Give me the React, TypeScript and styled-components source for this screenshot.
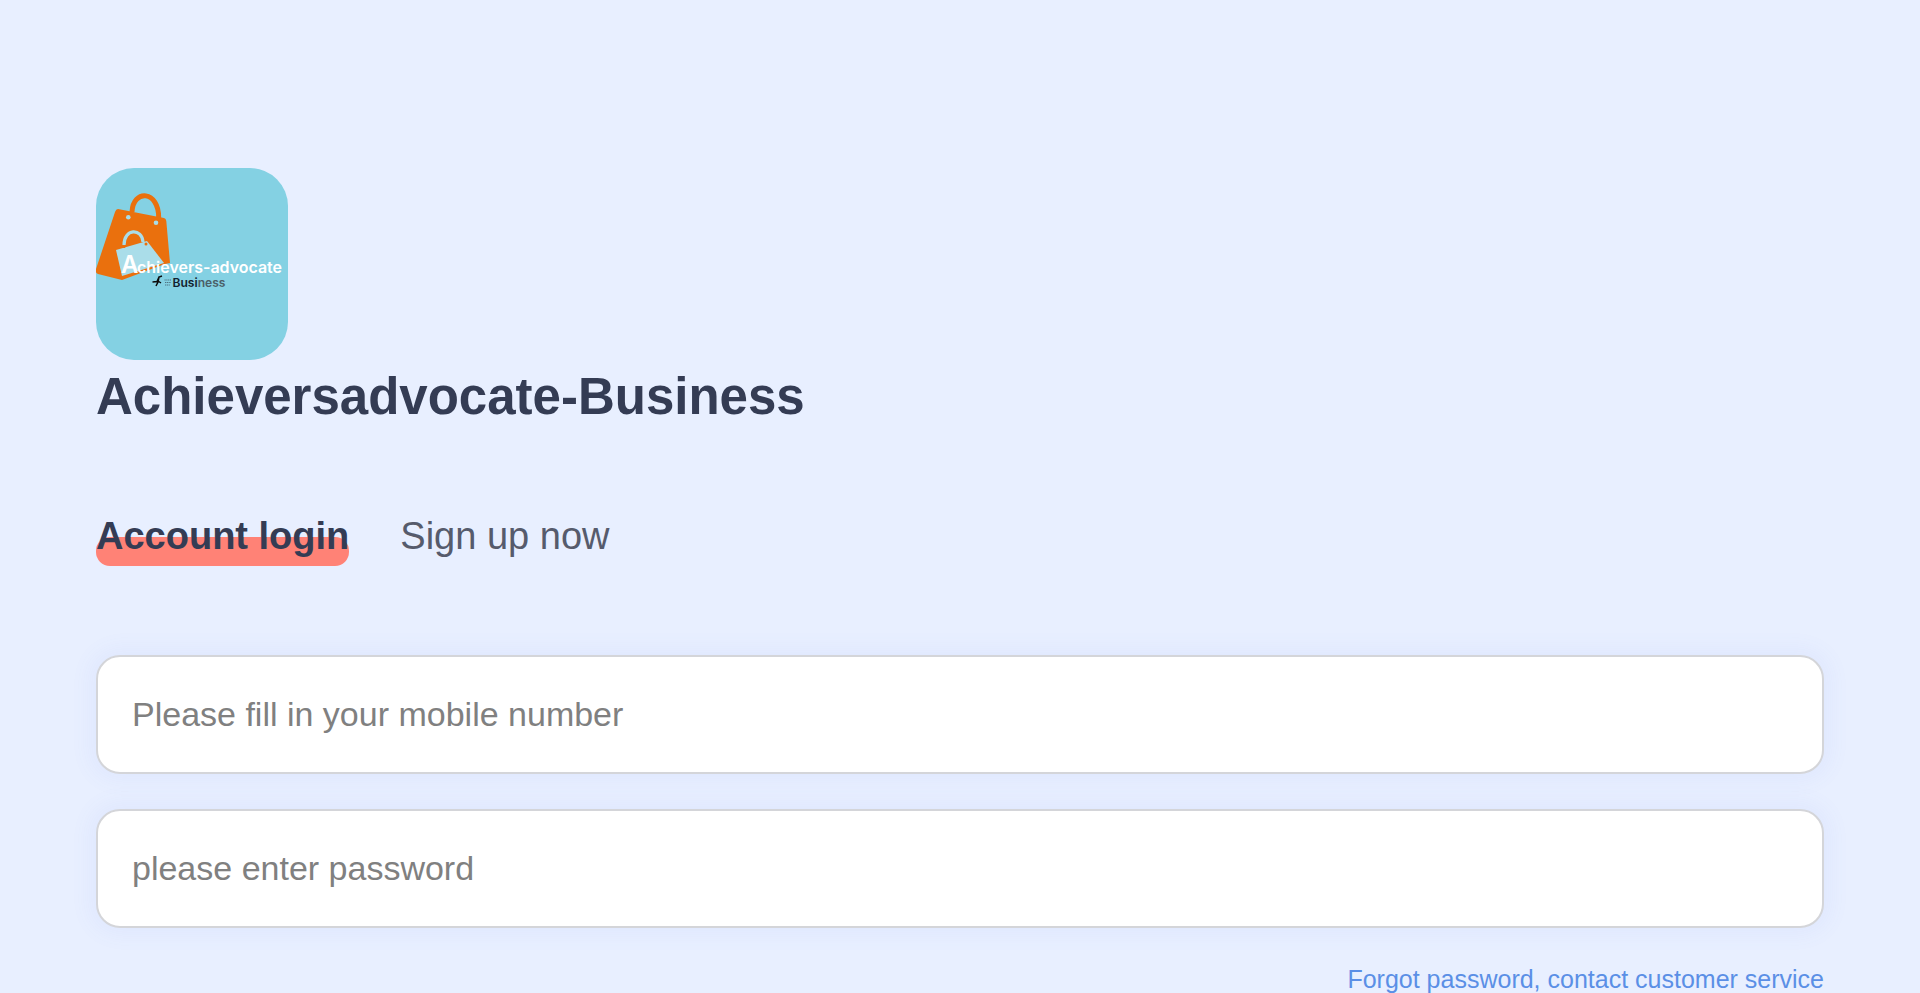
import styled, { createGlobalStyle } from 'styled-components'

const GlobalStyle = createGlobalStyle`
  * {
    box-sizing: border-box;
  }

  html, body {
    margin: 0;
    height: 100%;
    overflow: hidden;
    background: #e8efff;
    font-family: "Liberation Sans", Arial, sans-serif;
  }
`

const Page = styled.div`
  height: 993px;
  padding: 168px 96px 0;
  background: #e8efff;
`

const LogoBox = styled.div`
  width: 192px;
  height: 192px;
  border-radius: 38px;
  background: #84d1e3;
  overflow: hidden;
`

const Title = styled.h1`
  margin: 0;
  height: 72px;
  color: #343c54;
  font-size: 51px;
  font-weight: 700;
  line-height: 74px;
`

const Tabs = styled.div`
  display: flex;
  gap: 51px;
  margin-top: 75px;
`

const Tab = styled.div<{ $active?: boolean }>`
  position: relative;
  height: 58px;
  color: ${(props) => (props.$active ? '#343c54' : '#565b6c')};
  font-size: 38px;
  font-weight: ${(props) => (props.$active ? 700 : 400)};
  line-height: 58px;

  &::before {
    content: '';
    display: ${(props) => (props.$active ? 'block' : 'none')};
    position: absolute;
    left: 0;
    right: 0;
    bottom: -1px;
    height: 29px;
    border-radius: 14px;
    background: #ff8276;
  }
`

const TabLabel = styled.span`
  position: relative;
`

const Form = styled.form`
  margin-top: 90px;
  display: flex;
  flex-direction: column;
  gap: 35px;
`

const Field = styled.input`
  display: block;
  width: 100%;
  height: 119px;
  padding: 0 34px;
  border: 2px solid #d4d5d9;
  border-radius: 24px;
  background: #fff;
  outline: none;
  box-shadow: 0 0 20px 8px rgba(90, 110, 235, 0.05);
  font-family: inherit;
  font-size: 34px;

  &::placeholder {
    color: #808080;
    opacity: 1;
  }
`

const HelpRow = styled.div`
  display: flex;
  justify-content: flex-end;
  margin-top: 35px;
`

const HelpLink = styled.a`
  color: #5b8fe6;
  font-size: 25px;
  line-height: 32px;
`

const LogoScript = styled.text`
  fill: #fff;
  font-family: Inter, Lato, sans-serif;
  font-weight: 600;
`

const LogoSub = styled.text`
  fill: #12222e;
  font-family: Inter, Lato, sans-serif;
  font-size: 12px;
  font-weight: 600;
`

const Logo = () => (
  <svg width="192" height="192" viewBox="0 0 192 192">
    <path d="M22 41 L68 50 Q70 50.5 70.3 53 L74 95 L69 96 L26 112 L2 106 Q-1 105 0 101 L19 44 Q20 41 22 41 Z" fill="#ea700d" />
    <path d="M36 44 C37 21 63 22 62.7 50" fill="none" stroke="#ea700d" strokeWidth="5" />
    <circle cx="32.3" cy="49.3" r="2.3" fill="#a9dde8" />
    <circle cx="60" cy="54.7" r="2.3" fill="#a9dde8" />
    <path d="M20 82 L51 73 L68 95 L26 108 Z" fill="#aadde9" />
    <path d="M28 77 C28 60 46 60 47 74" fill="none" stroke="#aadde9" strokeWidth="3.2" />
    <circle cx="28" cy="78.5" r="1.5" fill="#ea700d" />
    <circle cx="50" cy="76" r="1.5" fill="#ea700d" />
    <LogoScript x="25" y="105" fontSize="24" fontWeight="800">A</LogoScript>
    <LogoScript x="41" y="105" fontSize="16" textLength="145" lengthAdjust="spacingAndGlyphs">chievers-advocate</LogoScript>
    <LogoSub x="76.5" y="118.7" textLength="53" lengthAdjust="spacingAndGlyphs">
      Busi<tspan fill="#4b5f68">ness</tspan>
    </LogoSub>
    <path d="M56.5 114 L61 113.5 L63 109 L66 108 M63 109 L62 114 L60 118 M62 113 L65 115" fill="none" stroke="#0c0c0c" strokeWidth="1.5" />
    <path d="M68.5 112 H75 M69 114.5 H75 M69 117 H74" fill="none" stroke="#4f7483" strokeWidth="1.1" strokeDasharray="1.2 0.6" />
  </svg>
)

const App = () => (
  <>
    <GlobalStyle />
    <Page>
      <LogoBox>
        <Logo />
      </LogoBox>
      <Title>Achieversadvocate-Business</Title>
      <Tabs>
        <Tab $active>
          <TabLabel>Account login</TabLabel>
        </Tab>
        <Tab>
          <TabLabel>Sign up now</TabLabel>
        </Tab>
      </Tabs>
      <Form>
        <Field placeholder="Please fill in your mobile number" />
        <Field type="password" placeholder="please enter password" />
      </Form>
      <HelpRow>
        <HelpLink>Forgot password, contact customer service</HelpLink>
      </HelpRow>
    </Page>
  </>
)

export default App
